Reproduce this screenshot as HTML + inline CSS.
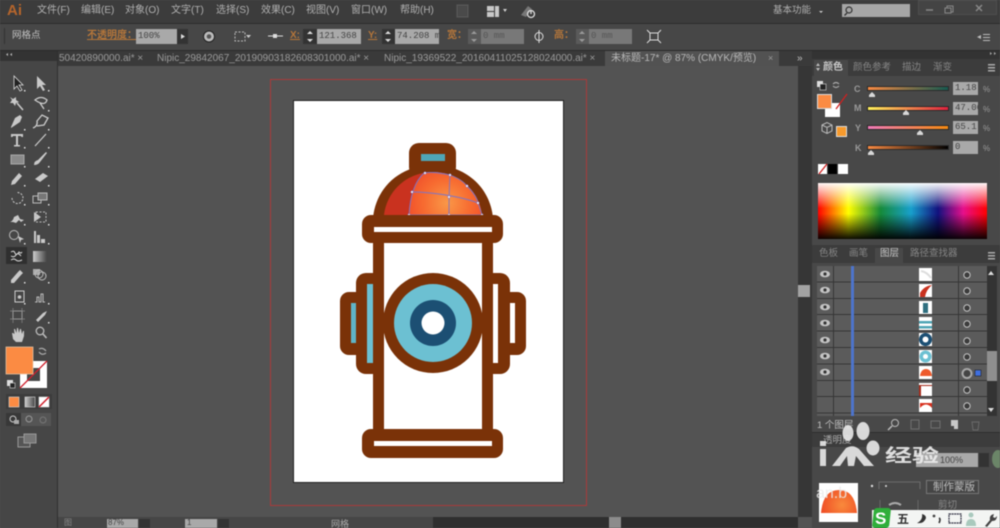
<!DOCTYPE html>
<html><head><meta charset="utf-8"><style>
html,body{margin:0;padding:0;background:#535353}
#r{position:relative;width:1000px;height:528px;overflow:hidden;background:#535353;font-family:"Liberation Sans","Noto Sans CJK SC",sans-serif;color:#c4c4c4;filter:blur(.45px)}
#r div,#r span.a{position:absolute}
.t{white-space:nowrap}
.m{top:4px;font-size:10px;line-height:14px;color:#b0b0b0}
.o{color:#b5763a;font-size:10px;line-height:12px;font-weight:bold}
.in{background:#a9a9a9;color:#444;font-size:9px;line-height:13px;font-family:"Liberation Mono","Noto Sans CJK SC",monospace;padding-left:2px;box-sizing:border-box;overflow:hidden}
.sp{background:#333;}
.ttab{top:51px;font-size:10px;line-height:15px;color:#9a9a9a}
.pt{font-size:9.5px;line-height:14px;color:#858585}
.lb{font-size:9px;font-weight:bold;line-height:12px;color:#999}
.tr{width:80px;height:3px;outline:1px solid #2a2a2a}
svg{position:absolute;left:0;top:0}
</style></head><body><div id="r">

<!-- menu bar -->
<div style="left:0;top:0;width:1000px;height:23px;background:#3c3c3c"></div>
<div style="left:0;top:23px;width:1000px;height:1px;background:#2c2c2c"></div>
<div class="t" style="left:7px;top:1px;font-size:15px;line-height:20px;font-weight:bold;color:#b5652c">Ai</div>
<div class="t m" style="left:37px">文件(F)</div>
<div class="t m" style="left:81px">编辑(E)</div>
<div class="t m" style="left:125px">对象(O)</div>
<div class="t m" style="left:171px">文字(T)</div>
<div class="t m" style="left:216px">选择(S)</div>
<div class="t m" style="left:261px">效果(C)</div>
<div class="t m" style="left:306px">视图(V)</div>
<div class="t m" style="left:351px">窗口(W)</div>
<div class="t m" style="left:400px">帮助(H)</div>
<div class="t m" style="left:773px;font-size:9.5px;top:4px">基本功能</div>
<div style="left:842px;top:4px;width:68px;height:13px;background:#a6a6a6"></div>
<div style="left:918px;top:0;width:79px;height:15px;background:#444;border:1px solid #4d4d4d;box-sizing:border-box"></div>

<!-- control bar -->
<div style="left:0;top:24px;width:1000px;height:26px;background:#474747"></div>
<div style="left:0;top:50px;width:1000px;height:1px;background:#2a2a2a"></div>
<div style="left:4px;top:28px;width:1px;height:16px;background:#333"></div>
<div class="t" style="left:12px;top:29px;font-size:9.5px;line-height:13px;color:#c2c2c2">网格点</div>
<div class="t o" style="left:87px;top:30px;text-decoration:underline">不透明度：</div>
<div class="in t" style="left:136px;top:29px;width:41px;height:15px;line-height:14px">100%</div>
<div class="sp" style="left:177px;top:29px;width:11px;height:15px"></div>
<div class="t o" style="left:290px;top:30px;text-decoration:underline">X:</div>
<div class="sp" style="left:303px;top:29px;width:14px;height:15px"></div>
<div class="in t" style="left:317px;top:29px;width:44px;height:15px;line-height:14px">121.368 m</div>
<div class="t o" style="left:368px;top:30px;text-decoration:underline">Y:</div>
<div class="sp" style="left:382px;top:29px;width:13px;height:15px"></div>
<div class="in t" style="left:395px;top:29px;width:44px;height:15px;line-height:14px">74.208 mm</div>
<div class="t o" style="left:447px;top:30px">宽：</div>
<div style="left:468px;top:29px;width:13px;height:15px;background:#5a5a5a"></div>
<div class="in t" style="left:481px;top:29px;width:43px;height:15px;line-height:14px;background:#787878;color:#565656">0 mm</div>
<div class="t o" style="left:554px;top:30px">高：</div>
<div style="left:576px;top:29px;width:13px;height:15px;background:#5a5a5a"></div>
<div class="in t" style="left:589px;top:29px;width:43px;height:15px;line-height:14px;background:#787878;color:#565656">0 mm</div>

<!-- tab bar -->
<div style="left:58px;top:51px;width:754px;height:15px;background:#3a3a3a"></div>
<div style="left:605px;top:51px;width:174px;height:15px;background:#525252"></div>
<div class="t ttab" style="left:59px">50420890000.ai* ×</div>
<div class="t ttab" style="left:157px">Nipic_29842067_20190903182608301000.ai* ×</div>
<div class="t ttab" style="left:384px">Nipic_19369522_20160411025128024000.ai* ×</div>
<div class="t ttab" style="left:611px;color:#b8b8b8">未标题-17* @ 87% (CMYK/预览)</div>
<div class="t ttab" style="left:768px;font-size:9px">×</div>
<div class="t ttab" style="left:797px;color:#c0c0c0">»</div>

<!-- tools panel -->
<div style="left:0;top:51px;width:57px;height:477px;background:#464646"></div>
<div style="left:57px;top:51px;width:1px;height:477px;background:#2f2f2f"></div>
<div style="left:0;top:51px;width:57px;height:10px;background:#333"></div>
<div style="left:6px;top:247px;width:21px;height:17px;background:#2f2f2f"></div>

<!-- canvas -->
<div style="left:270px;top:79px;width:317px;height:427px;border:1px solid #a93a3a;box-sizing:border-box"></div>
<div style="left:293px;top:100px;width:271px;height:383px;background:#fff;border:1px solid #222;box-sizing:border-box"></div>

<!-- hydrant + main svg -->
<svg width="1000" height="528" viewBox="0 0 1000 528">
<defs>
<radialGradient id="g" gradientUnits="userSpaceOnUse" cx="447" cy="203" r="44"><stop offset="0" stop-color="#fa9848"/><stop offset=".55" stop-color="#f76a30"/><stop offset="1" stop-color="#ee4a2a"/></radialGradient>
</defs>
<!-- lugs -->
<rect x="340" y="292" width="40" height="63" rx="9" fill="#7a3208"/>
<rect x="486" y="292" width="40" height="63" rx="9" fill="#7a3208"/>
<rect x="356" y="273" width="154" height="101" rx="10" fill="#7a3208"/>
<rect x="351" y="303" width="5" height="40" fill="#5fb5c8"/>
<rect x="510" y="303" width="5" height="40" fill="#fff"/>
<rect x="367" y="284" width="6" height="79" fill="#6cc0d2"/>
<rect x="493" y="284" width="5" height="79" fill="#fff"/>
<!-- body -->
<rect x="373" y="235" width="120" height="200" fill="#7a3208"/>
<rect x="384" y="235" width="98" height="200" fill="#fff"/>
<!-- cap -->
<rect x="409" y="143" width="47" height="34" rx="10" fill="#7a3208"/>
<path d="M373 218C376 186 402 165 433 165C464 165 490 186 493 218Z" fill="#7a3208"/>
<path d="M384 215C387 190 408 172 433 172C458 172 479 190 482 215Z" fill="#c9321f"/>
<path d="M409 215C410 198 414 182 424 173C428 172 430 172 433 172C458 172 479 190 482 215Z" fill="url(#g)"/>
<rect x="421" y="154" width="24" height="7" fill="#4fa6b6"/>
<g fill="none" stroke="#7c74c8" stroke-width=".9">
<path d="M409 215C410 198 414 182 424 173C430 172 436 172 450 175C458 178 464 182 467 186C473 192 477 198 478 203C480 208 481 212 482 215Z"/>
<path d="M409 215H482M412 192C430 192 460 196 478 203M450 175C449 190 449 205 449 215"/>
</g>
<g fill="#fff" stroke="#7c74c8" stroke-width=".5">
<circle cx="409" cy="215" r="1.2"/><circle cx="449" cy="215" r="1.2"/><circle cx="482" cy="215" r="1.2"/><circle cx="412" cy="192" r="1.2"/><circle cx="449" cy="197" r="1.2"/><circle cx="478" cy="203" r="1.2"/><circle cx="450" cy="175" r="1.2"/><circle cx="467" cy="186" r="1.2"/><circle cx="425" cy="173" r="1.2"/>
</g>
<!-- collar -->
<rect x="362" y="215" width="141" height="28" rx="9" fill="#7a3208"/>
<rect x="374" y="227" width="118" height="5" fill="#fff"/>
<!-- base -->
<rect x="362" y="429" width="141" height="29" rx="9" fill="#7a3208"/>
<rect x="374" y="441" width="118" height="5" fill="#fff"/>
<!-- wheel -->
<circle cx="433" cy="323" r="50" fill="#7a3208"/>
<circle cx="433" cy="323" r="39" fill="#6cc0d2"/>
<circle cx="433" cy="323" r="23" fill="#1c4f73"/>
<circle cx="433" cy="323" r="11.5" fill="#fff"/>
</svg>

<!-- right dock -->
<div style="left:798px;top:66px;width:14px;height:451px;background:#363636"></div>
<div style="left:798px;top:285px;width:12px;height:12px;background:#a3a3a3"></div>
<div style="left:812px;top:51px;width:188px;height:477px;background:#484848"></div>
<div style="left:812px;top:51px;width:188px;height:8px;background:#333"></div>
<div style="left:812px;top:59px;width:188px;height:17px;background:#3c3c3c"></div>
<div style="left:814px;top:60px;width:34px;height:16px;background:#484848"></div>
<div class="t pt" style="left:823px;top:61px;font-size:10px;color:#c8c8c8;font-weight:bold">颜色</div>
<div class="t pt" style="left:853px;top:61px">颜色参考</div>
<div class="t pt" style="left:902px;top:61px">描边</div>
<div class="t pt" style="left:933px;top:61px">渐变</div>

<!-- color sliders -->
<div class="t lb" style="left:854px;top:83px">C</div>
<div class="t lb" style="left:854px;top:102px">M</div>
<div class="t lb" style="left:855px;top:122px">Y</div>
<div class="t lb" style="left:855px;top:142px">K</div>
<div class="tr" style="left:868px;top:87px;background:linear-gradient(90deg,#f98a42,#155a50)"></div>
<div class="tr" style="left:868px;top:107px;background:linear-gradient(90deg,#fff15a,#e0203e)"></div>
<div class="tr" style="left:868px;top:126px;background:linear-gradient(90deg,#f07ab8,#f58a10)"></div>
<div class="tr" style="left:868px;top:146px;background:linear-gradient(90deg,#f98a42,#000)"></div>
<div class="in t" style="left:953px;top:82px;width:25px;height:13px">1.18</div>
<div class="in t" style="left:953px;top:102px;width:25px;height:13px">47.06</div>
<div class="in t" style="left:953px;top:121px;width:25px;height:13px">65.1</div>
<div class="in t" style="left:953px;top:141px;width:25px;height:13px">0</div>
<div class="t" style="left:983px;top:84px;font-size:8px;line-height:11px;color:#999">%</div>
<div class="t" style="left:983px;top:104px;font-size:8px;line-height:11px;color:#999">%</div>
<div class="t" style="left:983px;top:123px;font-size:8px;line-height:11px;color:#999">%</div>
<div class="t" style="left:983px;top:143px;font-size:8px;line-height:11px;color:#999">%</div>
<div style="left:825px;top:103px;width:15px;height:14px;background:#fff"></div>
<div style="left:817px;top:94px;width:15px;height:15px;background:#fb8b43;border:1px solid #ddd;box-sizing:border-box"></div>
<div style="left:836px;top:126px;width:11px;height:11px;background:#f79a2c;border:1px solid #ddd;box-sizing:border-box"></div>
<div style="left:818px;top:164px;width:9px;height:10px;background:#fff"></div>
<div style="left:828px;top:164px;width:9px;height:10px;background:#000"></div>
<div style="left:838px;top:164px;width:10px;height:10px;background:#fff"></div>
<div style="left:818px;top:183px;width:169px;height:56px;background:linear-gradient(180deg,rgba(255,255,255,.97),rgba(255,255,255,0) 45%,rgba(0,0,0,0) 55%,rgba(0,0,0,.95)),linear-gradient(90deg,#f00,#ff0 18%,#168a3a 37%,#18a0cc 55%,#12127e 71%,#e6108c 86%,#f00)"></div>

<!-- layers -->
<div style="left:812px;top:245px;width:188px;height:18px;background:#3c3c3c"></div>
<div style="left:875px;top:248px;width:28px;height:15px;background:#484848"></div>
<div class="t pt" style="left:819px;top:247px">色板</div>
<div class="t pt" style="left:849px;top:247px">画笔</div>
<div class="t pt" style="left:880px;top:247px;color:#c8c8c8">图层</div>
<div class="t pt" style="left:910px;top:247px">路径查找器</div>
<div style="left:817px;top:266px;width:170px;height:150px;background:repeating-linear-gradient(180deg,#5b5b5b 0,#5b5b5b 15.4px,#363636 15.4px,#363636 16.4px)"></div>
<div style="left:833px;top:266px;width:1px;height:150px;background:#363636"></div>
<div style="left:958px;top:266px;width:1px;height:150px;background:#363636"></div>
<div style="left:851px;top:266px;width:3px;height:150px;background:#4d74cc"></div>
<div style="left:987px;top:266px;width:10px;height:150px;background:#333"></div>
<div style="left:987px;top:351px;width:10px;height:30px;background:#8f8f8f"></div>
<div class="t" style="left:817px;top:419px;font-size:9.5px;line-height:13px;color:#c0c0c0">1 个图层</div>

<svg width="1000" height="528" viewBox="0 0 1000 528">
<!-- layer thumbs -->
<g>
<rect x="919" y="268" width="13" height="13" fill="#fff"/><path d="M921 271Q927 272 931 278" stroke="#ddd" stroke-width="2" fill="none"/>
<rect x="919" y="284" width="13" height="13" fill="#fff"/><path d="M920 297V293Q924 286 932 285Q926 290 925 297Z" fill="#c9321f"/>
<rect x="919" y="301" width="13" height="13" fill="#fff"/><rect x="923" y="303" width="5" height="10" fill="#2f6f80"/>
<rect x="919" y="317" width="13" height="13" fill="#fff"/><rect x="919" y="321" width="13" height="2.5" fill="#4fa6b6"/><rect x="919" y="326" width="13" height="2.5" fill="#4fa6b6"/>
<rect x="919" y="333" width="13" height="13" fill="#fff"/><circle cx="925.5" cy="339.5" r="6.5" fill="#1c4f73"/><circle cx="925.5" cy="339.5" r="3" fill="#fff"/>
<rect x="919" y="350" width="13" height="13" fill="#fff"/><circle cx="925.5" cy="356.5" r="6" fill="#6cc0d2"/><circle cx="925.5" cy="356.5" r="2.5" fill="#fff"/>
<rect x="919" y="366" width="13" height="13" fill="#fff"/><path d="M920 376Q921 369 926 369Q931 369 932 376Z" fill="#ee5a2c"/>
<rect x="919" y="383" width="13" height="13" fill="#fff"/><path d="M919 385H932V386H921V396H919Z" fill="#a52c1c"/>
<rect x="919" y="399" width="13" height="13" fill="#fff"/><path d="M920 403H932V408Q926 401 920 408Z" fill="#d8321f"/>
</g>
<!-- eyes -->
<g fill="#c4c4c4" stroke="none">
<ellipse cx="825" cy="274" rx="5" ry="3.3"/><circle cx="825" cy="274" r="1.6" fill="#333"/>
<ellipse cx="825" cy="290" rx="5" ry="3.3"/><circle cx="825" cy="290" r="1.6" fill="#333"/>
<ellipse cx="825" cy="307" rx="5" ry="3.3"/><circle cx="825" cy="307" r="1.6" fill="#333"/>
<ellipse cx="825" cy="323" rx="5" ry="3.3"/><circle cx="825" cy="323" r="1.6" fill="#333"/>
<ellipse cx="825" cy="340" rx="5" ry="3.3"/><circle cx="825" cy="340" r="1.6" fill="#333"/>
<ellipse cx="825" cy="356" rx="5" ry="3.3"/><circle cx="825" cy="356" r="1.6" fill="#333"/>
<ellipse cx="825" cy="372" rx="5" ry="3.3"/><circle cx="825" cy="372" r="1.6" fill="#333"/>
</g>
<!-- target circles -->
<g fill="#3c3c3c" stroke="#c4c4c4" stroke-width="1">
<circle cx="967" cy="275" r="3.2"/><circle cx="967" cy="291" r="3.2"/><circle cx="967" cy="308" r="3.2"/><circle cx="967" cy="324" r="3.2"/><circle cx="967" cy="341" r="3.2"/><circle cx="967" cy="357" r="3.2"/><circle cx="967" cy="390" r="3.2"/><circle cx="967" cy="406" r="3.2"/>
</g>
<circle cx="967" cy="373.5" r="4.5" fill="#444" stroke="#a8a8a8" stroke-width="2"/>
<rect x="975" y="370" width="6" height="6" fill="#3f6fe0" stroke="#222" stroke-width=".6"/>
<path d="M991 271l-3 4h6z M991 412l-3-4h6z" fill="#ddd"/>
<!-- layer footer icons -->
<g fill="none" stroke="#bbb"><circle cx="895" cy="423" r="3.5"/><path d="M892 426l-4 4" stroke-width="1.5"/></g>
<rect x="911" y="420" width="8" height="9" fill="none" stroke="#6f6f6f"/><rect x="931" y="421" width="9" height="7" fill="none" stroke="#6f6f6f"/>
<path d="M951 420h7v9h-4v-3h-3z" fill="#c8c8c8"/><path d="M972 422h7l-1 8h-5z" fill="none" stroke="#6a6a6a"/>

<!-- color panel details -->
<path d="M836 109L847 94" stroke="#d02020" stroke-width="1.3"/>
<path d="M819 174L827 164" stroke="#d02020" stroke-width="1.3"/>
<g fill="#d8d8d8"><path d="M869 95l3-3 3 3v2h-6z"/><path d="M903 113l3-3 3 3v2h-6z"/><path d="M917 133l3-3 3 3v2h-6z"/><path d="M868 153l3-3 3 3v2h-6z"/></g>
<rect x="817" y="81" width="6" height="6" fill="#ddd"/><rect x="820" y="84" width="6" height="6" fill="#222" stroke="#ddd" stroke-width=".6"/>
<path d="M833 84q3-3 6 0M839 86q-3 3-6 0" fill="none" stroke="#aaa" stroke-width="1.2"/>
<path d="M822 125l5-2.5 5 2.500v6l-5 2.500-5-2.500z M822 125l5 2.500 5-2.500M827 127.500v6" fill="none" stroke="#bbb"/>
<path d="M816 66l2-3 2 3zM816 68l2 3 2-3z" fill="#bbb"/>
<path d="M988 64h7v1.500h-7zM988 67h7v1.500h-7zM988 70h7v1.500h-7z" fill="#aaa"/>
<path d="M988 252h7v1.500h-7zM988 255h7v1.500h-7zM988 258h7v1.500h-7z" fill="#aaa"/>
<path d="M977 37l4-2v4z M983 34h7v1h-7zM983 37h7v1h-7zM983 40h7v1h-7z" fill="#bbb"/>
<path d="M990 52l2 1.500-2 1.500zM994 52l2 1.500-2 1.500z" fill="#aaa"/>
<path d="M8 53l-2 1.500 2 1.500zM12 53l-2 1.500 2 1.500z" fill="#bbb"/>

<!-- menu icons -->
<rect x="457" y="5" width="11" height="12" fill="#4a4a4a" stroke="#5b5b5b"/>
<path d="M487 6h7v5h-7zM495 6h4v11h-4zM487 12h7v5h-7z" fill="#c8c8c8"/><path d="M503 9l4 0-2 3z" fill="#ccc"/>
<path d="M521 15l7-9 4 3-6 8z" fill="#777"/><circle cx="531" cy="14" r="3.500" fill="none" stroke="#ddd" stroke-width="1.3"/><path d="M531 10v4" stroke="#ddd" stroke-width="1.3"/>
<path d="M819 11l4 0-2 2z" fill="#ccc"/>
<circle cx="849" cy="10" r="3" fill="none" stroke="#333" stroke-width="1.2"/><path d="M847 13l-2.500 2.500" stroke="#333" stroke-width="1.3"/>
<path d="M926 10h7" stroke="#888" stroke-width="1.5"/><rect x="947" y="6" width="6" height="6" fill="none" stroke="#888"/><rect x="945" y="8" width="6" height="5" fill="#444" stroke="#888"/>
<path d="M976 5l6 6M982 5l-6 6" stroke="#888" stroke-width="1.5"/>

<!-- control icons -->
<path d="M181 34l4 2.500-4 2.500z" fill="#ddd"/>
<circle cx="209" cy="36.500" r="5.500" fill="#bbb" stroke="#222"/><circle cx="209" cy="36.500" r="2.300" fill="#555"/>
<rect x="235" y="32" width="10" height="9" fill="none" stroke="#bbb" stroke-dasharray="2 1.500"/><path d="M246 35h5l-2.500 3z" fill="#ccc"/>
<path d="M268 36h15" stroke="#ddd" stroke-width="1"/><rect x="273" y="34" width="4" height="4" fill="#ddd"/>
<g fill="#ddd"><path d="M307 34l3-3 3 3zM307 39l3 3 3-3z"/><path d="M385 34l3-3 3 3zM385 39l3 3 3-3z"/></g>
<g fill="#9a9a9a"><path d="M471 34l3-3 3 3zM471 39l3 3 3-3z"/><path d="M579 34l3-3 3 3zM579 39l3 3 3-3z"/></g>
<path d="M535 36.500a4 4 0 0 1 4-4a4 4 0 0 1 4 4M535 36.500a4 4 0 0 0 4 4a4 4 0 0 0 4-4M539 30v13" stroke="#ddd" fill="none"/>
<path d="M650 33h8v7h-8zM647 30l3 3M661 30l-3 3M647 43l3-3M661 43l-3-3" fill="none" stroke="#ddd"/>

<!-- tool icons -->
<g fill="#c9c9c9" stroke="none">
<path d="M14 76l0 13 3-3 3 5 2-1-3-5 4 0z" fill="#222" stroke="#ddd" stroke-width=".8"/>
<path d="M37 76l0 13 3-3 3 5 2-1-3-5 4 0z"/>
<path d="M10 97l3 2 3-2 0 3 3 2-3 1-1 3-2-3-3 0 2-3z"/><path d="M17 103l6 7" stroke="#ccc" stroke-width="1.5"/>
<path d="M35 100q6-5 12 0q-2 7-12 0zM40 103l4 6" fill="none" stroke="#ccc" stroke-width="1.3"/>
<path d="M11 127l4-9 5-3 2 2-2 5-9 6z"/>
<path d="M33 128q5-2 4-7l5-6 6 3-4 7-7 1" fill="none" stroke="#ccc" stroke-width="1.3"/>
<path d="M11 134h12v3h-1.500l-.5-1h-3v9h2v1.500h-6V145h2v-9h-3l-.5 1H11z"/>
<path d="M35 146l11-12" stroke="#ccc" stroke-width="1.2" fill="none"/>
<rect x="11" y="155" width="13" height="9" fill="#8a8a8a" stroke="#aaa"/>
<path d="M34 165q0-4 4-5l8-8 1 1-7 9q-2 3-6 3z"/>
<path d="M11 185l1-4 7-8 3 3-7 8z"/>
<path d="M35 179l8-6 5 3-8 6z"/>
<path d="M12 198a5.500 5.500 0 1 0 5.500-5.500" fill="none" stroke="#ccc" stroke-dasharray="2 1.4"/>
<rect x="33" y="196" width="8" height="7" fill="none" stroke="#bbb"/><rect x="38" y="193" width="9" height="7" fill="#777" stroke="#bbb"/>
<path d="M10 222q3-1 4-5l4-2 2 4 4 1-3 2-2-2-3 3-3-1z"/>
<path d="M34 212l7 5-7 5z"/><rect x="36" y="212" width="10" height="10" fill="none" stroke="#bbb" stroke-dasharray="2 1.5"/>
<circle cx="14" cy="235" r="4.500" fill="none" stroke="#bbb"/><path d="M18 236l6 3-3 1-1 3z"/>
<path d="M34 231h2v12h-2zM37 235h3v8h-3zM41 239h4v4h-4z"/>
<g fill="none" stroke="#ddd" stroke-width="1"><path d="M11 252q3-2 4 1t4-1q2 2 3 0M11 256q3 2 5-1t5 1M11 260q3-2 5 0t6 0"/></g>
<path d="M11 280l7-8 2-2 3 3-2 2-7 8h-3z"/>
<rect x="33" y="269" width="7" height="6" fill="#aaa"/><circle cx="42" cy="276" r="4" fill="none" stroke="#bbb"/><circle cx="39" cy="274" r="4" fill="none" stroke="#bbb"/>
<rect x="15" y="291" width="9" height="11" fill="none" stroke="#ccc"/><circle cx="19.5" cy="297" r="1.800"/>
<path d="M35 302h2v-5h2v5h2v-8h2v8h2" fill="none" stroke="#bbb"/>
<rect x="13" y="311" width="9" height="8" fill="none" stroke="#bbb"/><path d="M10 311h15M10 319h15M13 308v15M22 308v15" stroke="#888" stroke-width=".7"/>
<path d="M36 320l7-7 4-2-2 4-7 7z"/>
<path d="M12 333l1 6 3 3h6l2-6 0-5-1 0-1 3-1-5-1 0-1 4-1-5-1 0-.5 5-1.500-4-1 0 .5 5-1.500-1z"/>
<circle cx="40" cy="331" r="3.800" fill="none" stroke="#bbb" stroke-width="1.3"/><path d="M43 334l3.500 4" stroke="#bbb" stroke-width="1.7"/>
</g>
<linearGradient id="gg" x1="0" y1="0" x2="1" y2="0"><stop offset="0" stop-color="#ccc"/><stop offset="1" stop-color="#444"/></linearGradient>
<rect x="33" y="251" width="14" height="11" fill="url(#gg)"/>
<g fill="#ddd">
<path d="M24 90h1.500v1.500H24zM48 90h1.500v1.500H48zM48 110h1.500v1.500H48zM24 129h1.500v1.500H24zM48 129h1.500v1.500H48zM24 147h1.500v1.500H24zM48 147h1.500v1.500H48zM24 166h1.500v1.500H24zM48 166h1.500v1.500H48zM24 185h1.500v1.500H24zM48 185h1.500v1.500H48zM24 204h1.500v1.500H24zM48 204h1.500v1.500H48zM24 224h1.500v1.500H24zM48 224h1.500v1.500H48zM24 243h1.500v1.500H24zM48 243h1.500v1.500H48zM24 282h1.500v1.500H24zM48 282h1.500v1.500H48zM24 303h1.500v1.500H24zM48 303h1.500v1.500H48zM48 322h1.500v1.500H48z"/>
</g>
<!-- fill/stroke -->
<rect x="20" y="361" width="27" height="27" fill="#fff"/><rect x="27" y="368" width="13" height="13" fill="#464646"/>
<path d="M20 388L47 361" stroke="#d0202c" stroke-width="1.3"/>
<rect x="6" y="347" width="27" height="27" fill="#fb8b43" stroke="#e8c8a8" stroke-width=".7"/>
<rect x="7" y="380" width="6" height="6" fill="#ddd"/><rect x="10" y="383" width="5" height="5" fill="#222" stroke="#ddd" stroke-width=".6"/>
<path d="M39 349q4-2 7 2M46 353q-4 3-7-1" fill="none" stroke="#aaa" stroke-width="1.2"/>
<rect x="6" y="394" width="46" height="15" fill="#3c3c3c"/>
<rect x="9" y="397" width="10" height="10" fill="#fb8b43" stroke="#ddd" stroke-width=".6"/>
<rect x="25" y="397" width="10" height="10" fill="url(#gg)" stroke="#ddd" stroke-width=".6"/>
<rect x="39" y="397" width="10" height="10" fill="#fff" stroke="#ddd" stroke-width=".6"/><path d="M39 407L49 397" stroke="#d0202c" stroke-width="1.5"/>
<rect x="6" y="413" width="15" height="13" fill="#383838"/><rect x="21" y="413" width="30" height="13" fill="#555"/>
<circle cx="13" cy="419" r="3" fill="none" stroke="#ccc"/><rect x="14" y="420" width="5" height="4" fill="#aaa"/>
<circle cx="29" cy="419" r="3" fill="none" stroke="#999"/><circle cx="43" cy="420" r="3" fill="none" stroke="#777"/>
<rect x="18" y="437" width="12" height="10" fill="#555" stroke="#999"/><rect x="24" y="434" width="12" height="9" fill="#777" stroke="#999"/>
</svg>

<!-- transparency panel -->
<div style="left:812px;top:432px;width:188px;height:1px;background:#2f2f2f"></div>
<div style="left:812px;top:433px;width:188px;height:14px;background:#3c3c3c"></div>
<div class="t" style="left:823px;top:434px;font-size:9.5px;line-height:13px;color:#aaa">透明度</div>
<div style="left:916px;top:453px;width:62px;height:14px;background:#a9a9a9"></div>
<div class="t" style="left:940px;top:454px;font-size:9px;line-height:13px;color:#444">100%</div>
<div style="left:979px;top:453px;width:10px;height:14px;background:#333"></div>
<div style="left:992px;top:450px;width:12px;height:18px;border-radius:50%;background:#6b8568"></div>
<div style="left:819px;top:483px;width:39px;height:39px;background:#fff"></div>
<svg width="1000" height="528" viewBox="0 0 1000 528"><defs><radialGradient id="t" gradientUnits="userSpaceOnUse" cx="842" cy="505" r="24"><stop offset="0" stop-color="#f98a3c"/><stop offset="1" stop-color="#ee4522"/></radialGradient></defs><path d="M821 513Q823 490 839 490Q855 490 857 513Z" fill="url(#t)"/>
<path d="M879 489v-7h41v7" fill="none" stroke="#777" stroke-width=".8"/><circle cx="872" cy="486" r="1.2" fill="#ddd"/><circle cx="886" cy="486" r="1" fill="#ddd"/>
<path d="M889 505q6-4 12 0" fill="none" stroke="#aaa" stroke-width="2"/><path d="M880 500v12M918 500v12" stroke="#666"/></svg>
<div style="left:926px;top:480px;width:53px;height:14px;background:#454545;border:1px solid #777;box-sizing:border-box"></div>
<div class="t" style="left:933px;top:481px;font-size:10.5px;line-height:13px;color:#bbb">制作蒙版</div>
<div class="t" style="left:938px;top:499px;font-size:9.5px;line-height:13px;color:#888">剪切</div>

<!-- status bar -->
<div style="left:58px;top:517px;width:740px;height:11px;background:#464646"></div>
<div class="t" style="left:64px;top:518px;font-size:8px;line-height:10px;color:#888">图</div>
<div style="left:107px;top:519px;width:31px;height:9px;background:#a9a9a9"></div>
<div class="t" style="left:108px;top:518px;font-size:8px;line-height:10px;color:#444">87%</div>
<div style="left:139px;top:519px;width:11px;height:9px;background:#333"></div>
<div style="left:185px;top:519px;width:32px;height:9px;background:#a9a9a9"></div>
<div class="t" style="left:187px;top:518px;font-size:8px;line-height:10px;color:#444">1</div>
<div style="left:218px;top:519px;width:11px;height:9px;background:#333"></div>
<div class="t" style="left:331px;top:519px;font-size:9px;line-height:10px;color:#aaa">网格</div>
<div style="left:433px;top:517px;width:365px;height:11px;background:#2f2f2f"></div>
<div style="left:609px;top:517px;width:12px;height:11px;background:#8c8c8c"></div>

<!-- watermark -->
<svg width="1000" height="528" viewBox="0 0 1000 528">
<g fill="#e6e6e6" fill-opacity=".92">
<ellipse cx="848" cy="433" rx="5.500" ry="8"/><ellipse cx="863" cy="431" rx="6.500" ry="9"/><ellipse cx="873" cy="448" rx="6.500" ry="7.500"/>
<path d="M820 449h6v17h-6z"/><rect x="820" y="441" width="6" height="5"/>
<path d="M832 466l14-18q7-4 13 1l15 17h-10l-8-10-2 10h-6l-1-10-7 10z"/>
</g>
</svg>
<div class="t" style="left:885px;top:442px;font-size:27px;line-height:28px;font-weight:bold;color:rgba(235,235,235,.92);transform:scaleY(.68);transform-origin:left center">经验</div>
<div class="t" style="left:816px;top:484px;font-size:16px;line-height:20px;color:rgba(235,235,235,.85)">an.b</div>

<!-- IME -->
<div style="left:872px;top:510px;width:128px;height:18px;background:#f3f5f3"></div>
<div style="left:873px;top:508px;width:17px;height:20px;background:#2fae3a;border-radius:3px;transform:skewX(-6deg)"></div>
<div class="t" style="left:875px;top:509px;font-size:17px;line-height:19px;font-weight:bold;color:#fff">S</div>
<div class="t" style="left:897px;top:511px;font-size:12px;line-height:17px;font-weight:bold;color:#333">五</div>
<svg width="1000" height="528" viewBox="0 0 1000 528">
<path d="M922 514q1 6-5 9q7 1 9-5q0-3-4-4z" fill="#333"/>
<circle cx="934" cy="516" r="1.400" fill="#444"/><path d="M939 518q2 1 0 5" stroke="#333" stroke-width="1.6" fill="none"/>
<rect x="949" y="514" width="12" height="9" fill="none" stroke="#334" stroke-width="1.2" stroke-dasharray="2 .6"/>
<circle cx="971" cy="515" r="2.500" fill="#a9c9bd"/><path d="M966 526q0-7 5-7t5 7z" fill="#a9c9bd"/>
<path d="M985 526l5-6q-1-5 4-6l-1 3 2 1 2-2q0 5-5 5l-5 6z" fill="#444"/>
</svg>
</div></body></html>
